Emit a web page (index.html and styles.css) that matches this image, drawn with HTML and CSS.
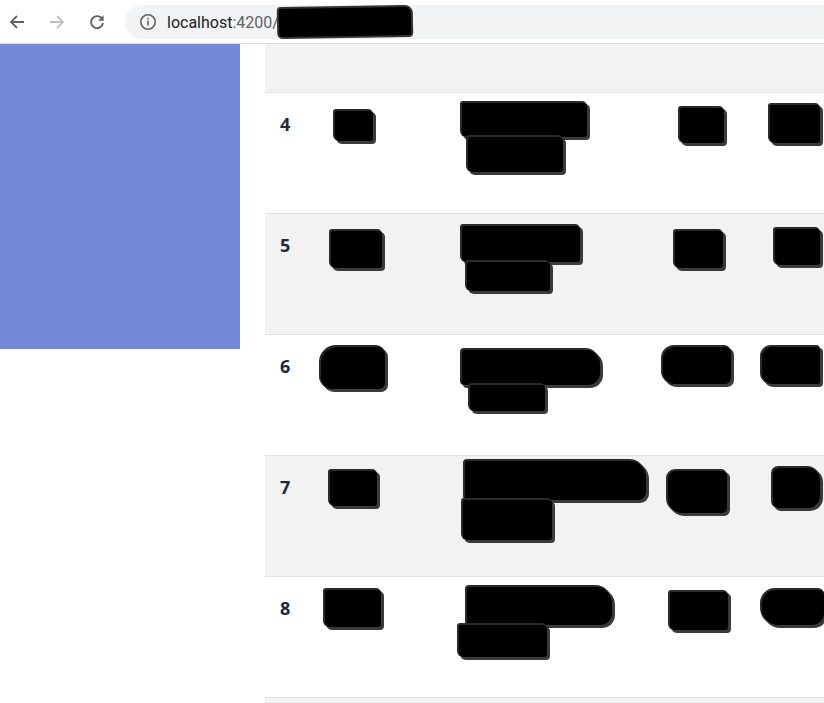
FILE: index.html
```html
<!DOCTYPE html>
<html>
<head>
<meta charset="utf-8">
<link rel="stylesheet" href="styles.css">
</head>
<body>
<div class="toolbar">
  <div class="navbtn">
    <svg width="20" height="20" viewBox="0 0 20 20"><path d="M17 10H4.5M10 4 4 10l6 6" fill="none" stroke="#5f6368" stroke-width="1.8"/></svg>
  </div>
  <div class="navbtn">
    <svg width="20" height="20" viewBox="0 0 20 20"><path d="M3 10h12.5M10 4l6 6-6 6" fill="none" stroke="#bdc1c6" stroke-width="1.8"/></svg>
  </div>
  <div class="navbtn">
    <svg width="20" height="20" viewBox="0 0 20 20"><path d="M15.3 7.2A6 6 0 1 0 16 11" fill="none" stroke="#5f6368" stroke-width="1.9"/><path d="M16.6 3.2v5.6H11z" fill="#5f6368"/></svg>
  </div>
  <div class="omnibox">
    <svg class="info" width="18" height="18" viewBox="0 0 18 18"><circle cx="9" cy="9" r="7.2" fill="none" stroke="#5f6368" stroke-width="1.6"/><rect x="8.2" y="7.6" width="1.6" height="5" fill="#5f6368"/><rect x="8.2" y="4.8" width="1.6" height="1.7" fill="#5f6368"/></svg>
    <span class="host">localhost</span><span class="path">:4200/</span><span class="urlmark"></span>
  </div>
</div>
<div class="page">
  <div class="sidebar"></div>
  <div class="table">
    <div class="thead"></div>
    <div class="row r4">
      <div class="num">4</div>
      <div class="cell"><span class="b a"></span></div>
      <div class="cell"><span class="b l1"></span><span class="b l2"></span></div>
      <div class="cell"><span class="b c"></span></div>
      <div class="cell"><span class="b d"></span></div>
    </div>
    <div class="row r5 alt">
      <div class="num">5</div>
      <div class="cell"><span class="b a"></span></div>
      <div class="cell"><span class="b l1"></span><span class="b l2"></span></div>
      <div class="cell"><span class="b c"></span></div>
      <div class="cell"><span class="b d"></span></div>
    </div>
    <div class="row r6">
      <div class="num">6</div>
      <div class="cell"><span class="b a"></span></div>
      <div class="cell"><span class="b l1"></span><span class="b l2"></span></div>
      <div class="cell"><span class="b c"></span></div>
      <div class="cell"><span class="b d"></span></div>
    </div>
    <div class="row r7 alt">
      <div class="num">7</div>
      <div class="cell"><span class="b a"></span></div>
      <div class="cell"><span class="b l1"></span><span class="b l2"></span></div>
      <div class="cell"><span class="b c"></span></div>
      <div class="cell"><span class="b d"></span></div>
    </div>
    <div class="row r8">
      <div class="num">8</div>
      <div class="cell"><span class="b a"></span></div>
      <div class="cell"><span class="b l1"></span><span class="b l2"></span></div>
      <div class="cell"><span class="b c"></span></div>
      <div class="cell"><span class="b d"></span></div>
    </div>
    <div class="tail"></div>
  </div>
</div>
</body>
</html>
```
FILE: styles.css
```css
html, body { margin: 0; padding: 0; }
body {
  width: 824px;
  height: 703px;
  overflow: hidden;
  background: #fff;
  font-family: "Open Sans", "Noto Sans", sans-serif;
}
.toolbar {
  height: 43px;
  border-bottom: 1px solid #dadce0;
  display: flex;
  align-items: center;
  padding-left: 7px;
}
.navbtn {
  width: 40px;
  height: 20px;
  display: flex;
  align-items: center;
}
.navbtn svg { display: block; }
.omnibox {
  margin-left: -2px;
  height: 34px;
  flex: 1;
  background: #f1f3f4;
  border-radius: 17px 0 0 17px;
  display: flex;
  align-items: center;
  padding-left: 14px;
  font-family: Roboto, "Noto Sans", sans-serif;
  font-size: 16px;
  margin-top: 1px;
}
.info { margin-right: 10px; }
.host { color: #202124; }
.path { color: #5f6368; }
.urlmark {
  display: inline-block;
  width: 132px;
  height: 28px;
  background: #000;
  border-radius: 2px 6px 2px 4px;
  box-shadow: 0 0 0 2px #333;
  transform: rotate(-1deg);
}
.page {
  display: flex;
  align-items: flex-start;
}
.sidebar {
  width: 240px;
  height: 305px;
  background: #7388d6;
  flex: none;
}
.table {
  margin-left: 25px;
  flex: 1;
  min-width: 0;
}
.thead {
  height: 48px;
  background: #f2f2f2;
  border-bottom: 1px solid #dee2e6;
}
.row {
  height: 120px;
  border-bottom: 1px solid #dee2e6;
  display: grid;
  grid-template-columns: 55px 135px 200px 100px 1fr;
  background: #fff;
}
.row.alt { background: #f2f2f2; }
.tail { height: 5px; background: #f2f2f2; }
.num {
  padding: 16px 0 0 15px;
  font-size: 18px;
  line-height: 30px;
  font-weight: 700;
  color: #1e2a3a;
}
.cell { display: flex; flex-direction: column; align-items: flex-start; }
.b {
  display: block;
  background: #000;
  border-radius: 2px 4px 3px 5px;
  box-shadow: 2px 2px 0 1px #3a3a3a, -1px -1px 0 1px #2a2a2a;
}

/* row 4 */
.r4 .a { margin: 18px 0 0 15px; width: 38px; height: 30px; }
.r4 .l1 { margin: 10px 0 0 7px; width: 125px; height: 34px; }
.r4 .l2 { margin-left: 13px; width: 95px; height: 35px; }
.r4 .c { margin: 15px 0 0 25px; width: 44px; height: 35px; }
.r4 .d { margin: 12px 0 0 15px; width: 50px; height: 38px; }
/* row 5 */
.r5 .a { margin: 17px 0 0 11px; width: 51px; height: 37px; }
.r5 .l1 { margin: 12px 0 0 7px; width: 118px; height: 36px; }
.r5 .l2 { margin-left: 12px; width: 83px; height: 29px; }
.r5 .c { margin: 17px 0 0 20px; width: 48px; height: 37px; }
.r5 .d { margin: 15px 0 0 20px; width: 45px; height: 36px; }
/* row 6 */
.r6 .a { margin: 12px 0 0 1px; width: 64px; height: 42px; border-radius: 16px 8px 6px 12px; }
.r6 .l1 { margin: 15px 0 0 7px; width: 138px; height: 35px; border-radius: 3px 14px 12px 3px; }
.r6 .l2 { margin-left: 15px; width: 75px; height: 26px; }
.r6 .c { margin: 12px 0 0 8px; width: 68px; height: 37px; border-radius: 12px 6px 6px 12px; }
.r6 .d { margin: 12px 0 0 7px; width: 58px; height: 37px; border-radius: 10px 3px 3px 10px; }
/* row 7 */
.r7 .a { margin: 15px 0 0 10px; width: 47px; height: 35px; }
.r7 .l1 { margin: 5px 0 0 10px; width: 181px; height: 39px; border-radius: 3px 16px 8px 3px; }
.r7 .l2 { margin-left: 8px; width: 89px; height: 40px; }
.r7 .c { margin: 15px 0 0 13px; width: 59px; height: 42px; border-radius: 8px 5px 5px 14px; }
.r7 .d { margin: 12px 0 0 18px; width: 47px; height: 40px; border-radius: 6px 12px 12px 6px; }
/* row 8 */
.r8 .a { margin: 13px 0 0 5px; width: 56px; height: 37px; }
.r8 .l1 { margin: 10px 0 0 12px; width: 145px; height: 38px; border-radius: 3px 16px 12px 3px; }
.r8 .l2 { margin-left: 4px; width: 88px; height: 32px; }
.r8 .c { margin: 15px 0 0 15px; width: 58px; height: 38px; }
.r8 .d { margin: 13px 0 0 7px; width: 62px; height: 35px; border-radius: 14px 5px 12px 16px; }
```
